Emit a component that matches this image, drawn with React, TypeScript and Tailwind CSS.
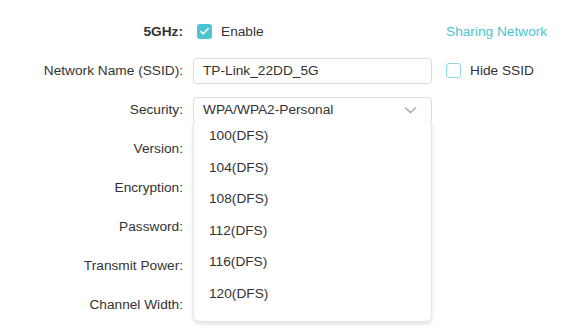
import { Check } from 'lucide-react'

const labels = ['Version:', 'Encryption:', 'Password:', 'Transmit Power:', 'Channel Width:']
const channels = ['100(DFS)', '104(DFS)', '108(DFS)', '112(DFS)', '116(DFS)', '120(DFS)']

export default function App() {
  return (
    <div className="w-[567px] h-[329px] bg-white overflow-hidden font-['Liberation_Sans',Arial,sans-serif] text-[13.7px] text-[#333]">
      <div className="relative pt-[19px] grid grid-cols-[183px_239px_auto] gap-x-[10px] gap-y-[13px] auto-rows-[26px] items-center">
        {/* 5GHz row */}
        <div className="text-right font-bold">5GHz:</div>
        <div className="flex items-center gap-[9px] pl-[4px]">
          <span className="w-[15px] h-[15px] rounded-[3px] bg-[#4fc3d1] flex items-center justify-center">
            <Check size={11} strokeWidth={3.5} className="text-white" />
          </span>
          <span>Enable</span>
        </div>
        <div className="pl-[4px] text-[#4fc3d1]">Sharing Network</div>

        {/* SSID */}
        <div className="text-right">Network Name (SSID):</div>
        <div className="h-[26px] border border-[#dcdcdc] rounded-[4px] flex items-center pl-[9px]">TP-Link_22DD_5G</div>
        <div className="flex items-center gap-[9px] pl-[4px]">
          <span className="w-[15px] h-[15px] rounded-[3px] border border-[#8fd6df]" />
          <span>Hide SSID</span>
        </div>

        {/* Security */}
        <div className="text-right">Security:</div>
        <div className="h-[26px] border border-[#dcdcdc] rounded-[4px] flex items-center justify-between pl-[9px] pr-[14px]">
          <span>WPA/WPA2-Personal</span>
          <svg width="13" height="8" viewBox="0 0 13 8" fill="none" stroke="#a8a8a8" strokeWidth="1.5">
            <path d="M1 1.5l5.5 5 5.5-5" />
          </svg>
        </div>
        <div />

        {labels.map((l) => (
          <div key={l} className="col-start-1 text-right">{l}</div>
        ))}

        {/* Channel dropdown */}
        <div className="absolute left-[193px] top-[122px] w-[239px] h-[200px] bg-white border border-[#e6e6e6] border-t-0 rounded-b-[6px] shadow-[0_2px_4px_rgba(0,0,0,0.12)] overflow-hidden">
          <div className="-mt-[1px] flex flex-col pl-[15px]">
            {channels.map((c) => (
              <div key={c} className="h-[31.5px] flex items-center">{c}</div>
            ))}
          </div>
        </div>
      </div>
    </div>
  )
}
